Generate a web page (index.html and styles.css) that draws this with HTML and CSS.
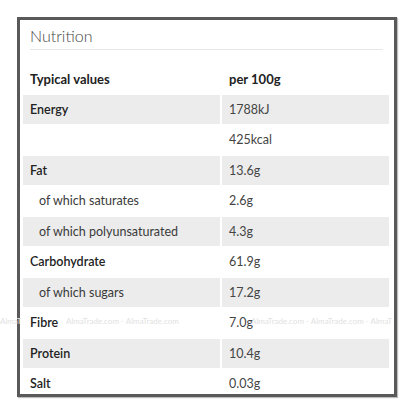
FILE: index.html
```html
<!DOCTYPE html>
<html lang="en">
  <head>
    <meta charset="UTF-8" />
    <meta name="viewport" content="width=device-width, initial-scale=1.0" />
    <title>Nutrition</title>
    <link rel="stylesheet" href="styles.css">
  </head>
  <body>
    <div class="panel">
      <h2 class="heading">Nutrition</h2>
      <table class="facts">
        <tr class="head">
          <th>Typical values</th>
          <th>per 100g</th>
        </tr>
        <tr class="shade">
          <td class="main">Energy</td>
          <td>1788kJ</td>
        </tr>
        <tr>
          <td></td>
          <td>425kcal</td>
        </tr>
        <tr class="shade">
          <td class="main">Fat</td>
          <td>13.6g</td>
        </tr>
        <tr>
          <td class="sub">of which saturates</td>
          <td>2.6g</td>
        </tr>
        <tr class="shade">
          <td class="sub">of which polyunsaturated</td>
          <td>4.3g</td>
        </tr>
        <tr>
          <td class="main">Carbohydrate</td>
          <td>61.9g</td>
        </tr>
        <tr class="shade">
          <td class="sub">of which sugars</td>
          <td>17.2g</td>
        </tr>
        <tr>
          <td class="main">Fibre</td>
          <td>7.0g</td>
        </tr>
        <tr class="shade">
          <td class="main">Protein</td>
          <td>10.4g</td>
        </tr>
        <tr>
          <td class="main">Salt</td>
          <td>0.03g</td>
        </tr>
      </table>
    </div>
    <div class="watermark">
      <span class="wm-a">AlmaT</span>
      <span class="wm-b">AlmaTrade.com - AlmaTrade.com</span>
      <span class="wm-c">AlmaTrade.com - AlmaTrade.com - AlmaT</span>
    </div>
  </body>
</html>
```

FILE: styles.css
```css
body {
  margin: 0;
  background: #fff;
  font-family: Lato, "Open Sans", sans-serif;
  color: #333;
  position: relative;
  width: 416px;
  height: 416px;
  overflow: hidden;
}
.panel {
  margin: 17px 0 0 17px;
  width: 374px;
  height: 374px;
  border: 3px solid #595959;
  box-shadow: 1px 1px 1px rgba(0, 0, 0, 0.25);
  background: #fff;
}
.heading {
  margin: 0 11px 0 10px;
  padding: 6px 0 4px;
  font-size: 16px;
  line-height: 19px;
  font-weight: 300;
  color: #444;
  border-bottom: 1px solid #e6e6e6;
}
.facts {
  margin: 13px 0 0 1px;
  border-collapse: separate;
  border-spacing: 2px 1px;
  table-layout: fixed;
  width: 370px;
  font-size: 12.5px;
}
.facts th,
.facts td {
  height: 29.5px;
  padding: 0 0 0 7px;
  text-align: left;
  vertical-align: middle;
}
.facts th:first-child,
.facts td:first-child {
  width: 190px;
}
.facts th {
  font-weight: 700;
  color: #222;
  font-size: 13px;
}
.facts td {
  color: #444;
}
.shade td {
  background: #ececec;
}
.main {
  font-weight: 600;
  color: #222 !important;
}
.sub {
  padding-left: 16px !important;
  color: #3a3a3a !important;
}
.watermark {
  position: absolute;
  left: 0;
  top: 316px;
  width: 416px;
  display: flex;
  white-space: nowrap;
  overflow: hidden;
  font-size: 8px;
  color: #e2e2e2;
}
.wm-a {
  width: 26px;
  overflow: hidden;
}
.wm-b {
  margin-left: 40px;
  width: 155px;
  overflow: hidden;
}
.wm-c {
  margin-left: 30px;
}
```
